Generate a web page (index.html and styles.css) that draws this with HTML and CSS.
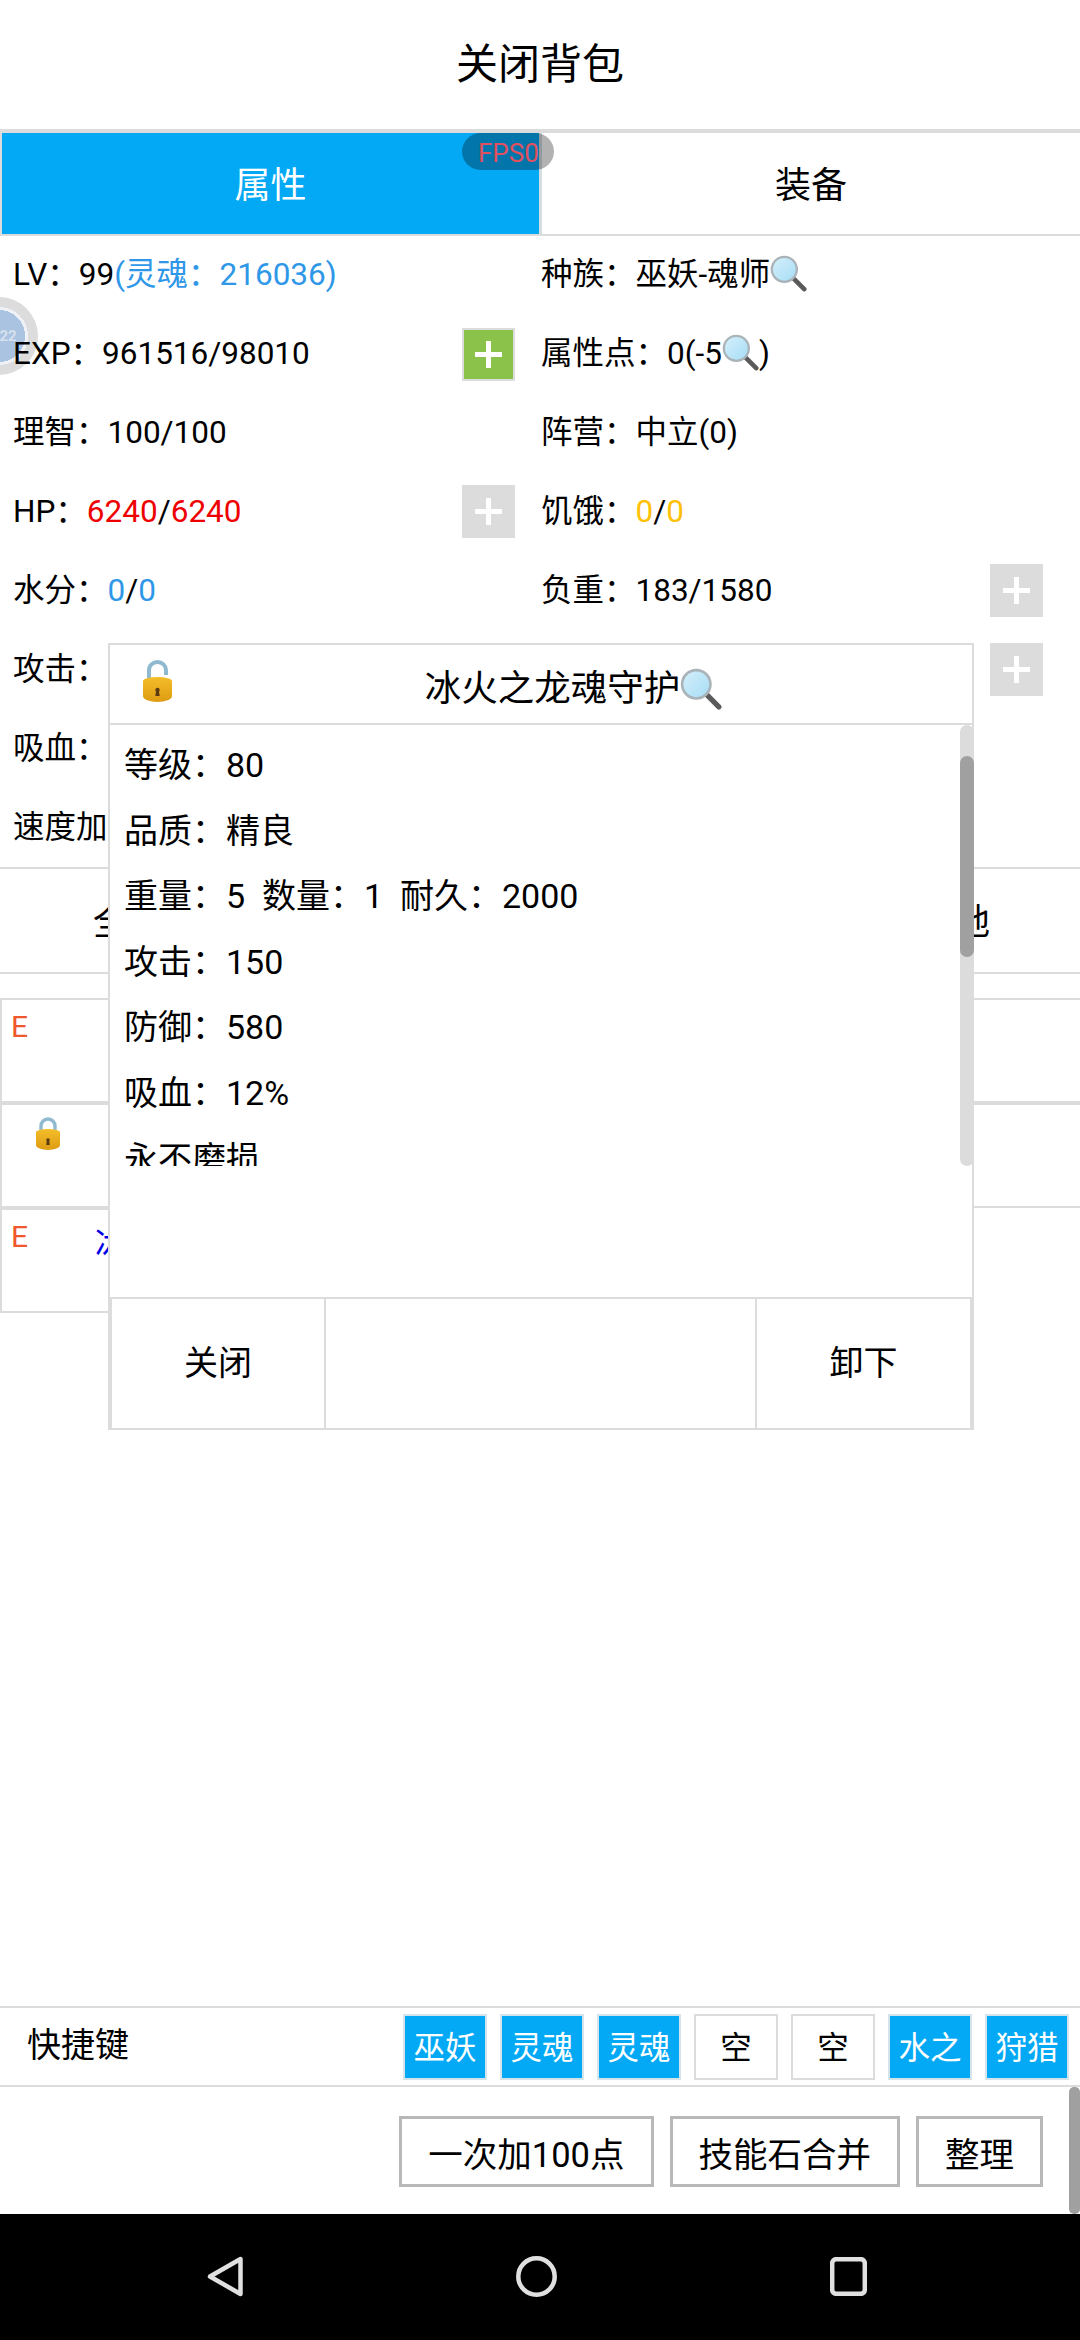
FILE: index.html
```html
<!DOCTYPE html>
<html lang="zh-CN">
<head>
    <meta charset="UTF-8">
    <title>关闭背包</title>
    <link rel="stylesheet" href="styles.css">
</head>
<body>
    <!-- shared emoji drawings -->
    <svg class="defs" width="0" height="0">
        <defs>
            <linearGradient id="lensFill" x1="0" y1="0" x2="1" y2="1">
                <stop offset="0" stop-color="#d6f0fb"/>
                <stop offset="1" stop-color="#a5dcf5"/>
            </linearGradient>
            <linearGradient id="goldFill" x1="0" y1="0" x2="0" y2="1">
                <stop offset="0" stop-color="#f5bd2a"/>
                <stop offset="1" stop-color="#dd9b12"/>
            </linearGradient>
            <symbol id="mag" viewBox="0 0 40 40">
                <path d="M24 24 L37 37" stroke="#5a5a5a" stroke-width="5" stroke-linecap="round"/>
                <circle cx="15.5" cy="15.5" r="13.5" fill="url(#lensFill)" stroke="#a9b3b8" stroke-width="2.5"/>
            </symbol>
            <symbol id="lockOpen" viewBox="0 0 29 42">
                <path d="M6 22 V10 a8.5 8 0 0 1 17 0 V15" fill="none" stroke="#8fb9cf" stroke-width="4"/>
                <path d="M0 21 a14.5 4 0 0 1 29 0 V36 a14.5 6 0 0 1 -29 0 Z" fill="url(#goldFill)"/>
                <circle cx="14.5" cy="30" r="2.2" fill="#5b3a12"/>
                <path d="M13.3 30 h2.4 l1 6 h-4.4 Z" fill="#5b3a12"/>
            </symbol>
            <symbol id="lockShut" viewBox="0 0 24 33">
                <path d="M5 14 V9 a7 7 0 0 1 14 0 V14" fill="none" stroke="#8fb9cf" stroke-width="3.4"/>
                <path d="M0 15 a12 3 0 0 1 24 0 V28 a12 5 0 0 1 -24 0 Z" fill="url(#goldFill)"/>
                <circle cx="12" cy="23" r="1.8" fill="#5b3a12"/>
                <path d="M11 23 h2 l.8 5 h-3.6 Z" fill="#5b3a12"/>
            </symbol>
        </defs>
    </svg>

    <div class="app">
        <div class="float-ball"><span>22</span></div>

        <div class="topbar">关闭背包</div>

        <div class="tabs">
            <div class="tab tab-active">属性</div>
            <div class="tab">装备</div>
            <div class="fps">FPS0</div>
        </div>

        <div class="stats">
            <div class="stat"><span>LV：99<span class="c-blue">(灵魂：216036)</span></span></div>
            <div class="stat stat-right"><span>种族：巫妖-魂师<svg class="mag"><use href="#mag"/></svg></span></div>

            <div class="stat"><span>EXP：961516/98010</span><div class="plus plus-on"></div></div>
            <div class="stat stat-right"><span>属性点：0(-5<svg class="mag"><use href="#mag"/></svg>)</span></div>

            <div class="stat"><span>理智：100/100</span></div>
            <div class="stat stat-right"><span>阵营：中立(0)</span></div>

            <div class="stat"><span>HP：<span class="c-red">6240</span>/<span class="c-red">6240</span></span><div class="plus"></div></div>
            <div class="stat stat-right"><span>饥饿：<span class="c-yellow">0</span>/<span class="c-yellow">0</span></span></div>

            <div class="stat"><span>水分：<span class="c-blue">0</span>/<span class="c-blue">0</span></span></div>
            <div class="stat stat-right"><span>负重：183/1580</span><div class="plus"></div></div>

            <div class="stat"><span>攻击：</span></div>
            <div class="stat stat-right"><span></span><div class="plus"></div></div>

            <div class="stat"><span>吸血：</span></div>
            <div class="stat stat-right"></div>

            <div class="stat"><span>速度加</span></div>
            <div class="stat stat-right"></div>
        </div>

        <div class="filter-row">
            <span>全</span>
            <span>地</span>
        </div>

        <div class="item-list">
            <div class="item"><span class="item-e">E</span></div>
            <div class="item"><svg class="lock-small"><use href="#lockShut"/></svg></div>
            <div class="item item-short"><span class="item-e">E</span><span class="item-name">冰火之龙魂守护</span></div>
        </div>

        <div class="spacer"></div>

        <div class="shortcuts">
            <div class="shortcuts-label">快捷键</div>
            <div class="key key-on">巫妖</div>
            <div class="key key-on">灵魂</div>
            <div class="key key-on">灵魂</div>
            <div class="key">空</div>
            <div class="key">空</div>
            <div class="key key-on">水之</div>
            <div class="key key-on">狩猎</div>
        </div>

        <div class="actions">
            <div class="action-btn">一次加100点</div>
            <div class="action-btn">技能石合并</div>
            <div class="action-btn">整理</div>
            <div class="page-scroll"></div>
        </div>

        <div class="navbar">
            <svg width="36" height="41" viewBox="0 0 36 41"><path d="M33.5 3 V38 L3 20.5 Z" fill="none" stroke="#e0e0e0" stroke-width="4.5" stroke-linejoin="round"/></svg>
            <svg width="41" height="41" viewBox="0 0 41 41"><circle cx="20.5" cy="20.5" r="18.2" fill="none" stroke="#e0e0e0" stroke-width="4.5"/></svg>
            <svg width="37" height="39" viewBox="0 0 37 39"><rect x="2.2" y="2.2" width="32.6" height="34.6" rx="4" fill="none" stroke="#e0e0e0" stroke-width="4.5"/></svg>
        </div>

        <!-- item detail popup -->
        <div class="modal">
            <div class="modal-head">
                <svg class="lock-big"><use href="#lockOpen"/></svg>
                <div class="modal-title">冰火之龙魂守护<svg class="mag mag-title"><use href="#mag"/></svg></div>
            </div>
            <div class="modal-body">
                <div class="modal-lines">
                    <p>等级：80</p>
                    <p>品质：精良</p>
                    <p>重量：5&nbsp;&nbsp;数量：1&nbsp;&nbsp;耐久：2000</p>
                    <p>攻击：150</p>
                    <p>防御：580</p>
                    <p>吸血：12%</p>
                    <p>永不磨损</p>
                </div>
                <div class="scroll-track"><div class="scroll-thumb"></div></div>
            </div>
            <div class="modal-foot">
                <div class="foot-btn foot-left">关闭</div>
                <div class="foot-btn foot-mid"></div>
                <div class="foot-btn foot-right">卸下</div>
            </div>
        </div>
    </div>
</body>
</html>
```

FILE: styles.css
```css
* {
    box-sizing: border-box;
}

body {
    margin: 0;
    background: #fff;
    color: #000;
    font-family: Roboto, "Noto Sans CJK SC", sans-serif;
}

p {
    margin: 0;
}

.defs {
    position: absolute;
}

.app {
    position: relative;
    display: flex;
    flex-direction: column;
    width: 1080px;
    height: 2340px;
    overflow: hidden;
}

.c-blue { color: #2f97e8; }
.c-red { color: #ee0000; }
.c-yellow { color: #ffc107; }

/* Floating ball on the left edge */
.float-ball {
    position: absolute;
    left: -40px;
    top: 297px;
    width: 78px;
    height: 78px;
    border-radius: 50%;
    background: radial-gradient(circle, #a9c3e0 0 26px, #eef2f6 26px 29px, #dcdcdc 29px);
    display: flex;
    align-items: center;
    justify-content: center;
}

.float-ball span {
    color: #d5e0ee;
    font-size: 15px;
    font-weight: bold;
    margin-left: 18px;
}

/* Header */
.topbar {
    flex: none;
    height: 133px;
    border-bottom: 4px solid #dcdcdc;
    display: flex;
    align-items: center;
    justify-content: center;
    font-size: 42px;
    padding-bottom: 8px;
}

/* Main tabs */
.tabs {
    position: relative;
    flex: none;
    display: flex;
    height: 103px;
    border-bottom: 2px solid #dcdcdc;
}

.tab {
    display: flex;
    align-items: center;
    justify-content: center;
    flex: 1;
    font-size: 36px;
    padding-bottom: 4px;
}

.tab-active {
    flex: none;
    width: 542px;
    background: #03a9f4;
    background-clip: padding-box;
    color: #fff;
    border-left: 2px solid #dcdcdc;
    border-right: 3px solid #d5dde0;
}

.fps {
    position: absolute;
    left: 462px;
    top: 0;
    width: 92px;
    height: 37px;
    padding: 3px 0 0 16px;
    border-radius: 19px;
    background: rgba(0, 0, 0, 0.3);
    color: #e0505f;
    font-size: 26px;
    line-height: 34px;
}

/* Character stats */
.stats {
    position: relative;
    z-index: 1;
    flex: none;
    display: grid;
    grid-template-columns: 540px 540px;
    grid-auto-rows: 79px;
    margin-top: -2px;
    height: 633px;
    font-size: 31.5px;
}

.stat {
    display: flex;
    align-items: center;
    justify-content: space-between;
    padding: 0 25px 0 13px;
}

.stat > span {
    margin-bottom: 6px;
}

.stat-right {
    padding: 0 37px 0 1px;
}

.mag {
    width: 37px;
    height: 37px;
    vertical-align: -7px;
}

.plus {
    position: relative;
    flex: none;
    width: 53px;
    height: 53px;
    margin-top: 2px;
    background: #dcdcdc;
}

.plus::before,
.plus::after {
    content: "";
    position: absolute;
    background: #fff;
}

.plus::before {
    left: 13px;
    top: 24px;
    width: 27px;
    height: 5px;
}

.plus::after {
    left: 24px;
    top: 13px;
    width: 5px;
    height: 27px;
}

.plus-on {
    background: #8bc34a;
    border: 2px solid #dcdcdc;
    margin-top: 4px;
}

.plus-on::before {
    left: 11px;
    top: 22px;
}

.plus-on::after {
    left: 22px;
    top: 11px;
}

/* Bag filter */
.filter-row {
    flex: none;
    display: flex;
    justify-content: space-between;
    align-items: center;
    height: 107px;
    padding: 0 90px 3px 93px;
    border-top: 2px solid #dcdcdc;
    border-bottom: 2px solid #dcdcdc;
    font-size: 36px;
}

/* Bag items */
.item-list {
    flex: none;
    margin-top: 24px;
}

.item {
    display: flex;
    align-items: flex-start;
    height: 105px;
    padding: 12px 9px;
    border: 2px solid #dcdcdc;
    border-right: none;
}

.item-short {
    width: 540px;
}

.item-e {
    color: #ee582c;
    font-size: 30px;
    line-height: 30px;
}

.item-name {
    margin: -5px 0 0 67px;
    color: #0000e6;
    font-size: 34px;
}

.lock-small {
    width: 24px;
    height: 33px;
    margin: 0 0 0 25px;
}

.spacer {
    flex: 1;
}

/* Shortcut keys */
.shortcuts {
    flex: none;
    display: flex;
    align-items: center;
    gap: 13px;
    height: 81px;
    padding: 0 11px 0 27px;
    border-top: 2px solid #dcdcdc;
    border-bottom: 2px solid #dcdcdc;
}

.shortcuts-label {
    margin-right: auto;
    padding-bottom: 9px;
    font-size: 34px;
}

.key {
    display: flex;
    align-items: center;
    justify-content: center;
    width: 84px;
    height: 66px;
    padding-bottom: 4px;
    border: 2px solid #dcdcdc;
    font-size: 31.5px;
}

.key-on {
    border-color: #d5e3ea;
    background: #03a9f4;
    color: #fff;
}

/* Bottom actions */
.actions {
    position: relative;
    flex: none;
    display: flex;
    align-items: center;
    justify-content: flex-end;
    gap: 16px;
    height: 127px;
    padding: 2px 37px 0 0;
}

.action-btn {
    display: flex;
    align-items: center;
    height: 71px;
    padding: 0 26px;
    border: 3px solid #b8b8b8;
    font-size: 34.5px;
}

.page-scroll {
    position: absolute;
    right: 0;
    top: 0;
    width: 11px;
    height: 127px;
    border-radius: 5px;
    background: #a0a0a0;
}

/* Android nav */
.navbar {
    flex: none;
    display: flex;
    align-items: center;
    gap: 273px;
    height: 126px;
    padding: 0 0 2px 207px;
    background: #000;
}

/* Popup */
.modal {
    position: absolute;
    left: 108px;
    top: 643px;
    z-index: 2;
    display: flex;
    flex-direction: column;
    width: 866px;
    height: 787px;
    border: 2px solid #dcdcdc;
    background: #fff;
}

.modal-head {
    flex: none;
    display: flex;
    align-items: center;
    height: 80px;
    border-bottom: 2px solid #dcdcdc;
}

.lock-big {
    flex: none;
    width: 29px;
    height: 42px;
    margin: 0 3px 6px 33px;
}

.modal-title {
    flex: 1;
    padding-top: 2px;
    text-align: center;
    font-size: 36.5px;
}

.mag-title {
    width: 42px;
    height: 42px;
    vertical-align: -9px;
}

.modal-body {
    position: relative;
    flex: none;
    height: 572px;
}

.modal-lines {
    height: 441px;
    padding: 8px 0 0 14px;
    overflow: hidden;
    font-size: 34px;
    line-height: 65.6px;
}

.scroll-track {
    position: absolute;
    right: -2px;
    top: 0;
    width: 14px;
    height: 441px;
    border-radius: 7px;
    background: #dcdcdc;
}

.scroll-thumb {
    margin-top: 31px;
    height: 201px;
    border-radius: 7px;
    background: #a0a0a0;
}

.modal-foot {
    flex: 1;
    display: flex;
    border-top: 2px solid #dcdcdc;
    border-left: 2px solid #dcdcdc;
    border-right: 2px solid #dcdcdc;
}

.foot-btn {
    display: flex;
    align-items: center;
    justify-content: center;
    font-size: 34px;
    padding-bottom: 6px;
}

.foot-left {
    flex: none;
    width: 214px;
    border-right: 2px solid #dcdcdc;
}

.foot-mid {
    flex: 1;
    border-right: 2px solid #dcdcdc;
}

.foot-right {
    flex: none;
    width: 213px;
}
```
